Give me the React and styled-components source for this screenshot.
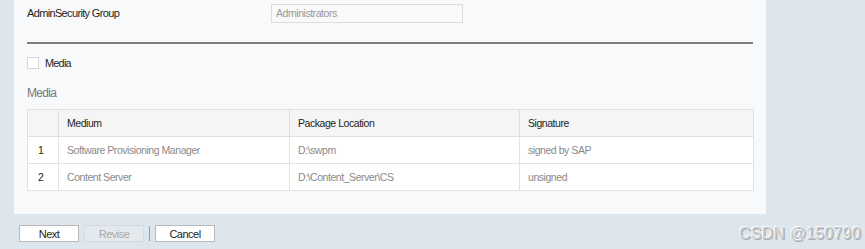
import React from "react";
import styled, { createGlobalStyle } from "styled-components";

const Global = createGlobalStyle`
    html, body {
        margin: 0;
        padding: 0;
        background-color: #dde6ed;
        font-family: "Liberation Sans", Arial, sans-serif;
    }
`
const Page = styled.div`
    position: relative;
    width: 865px;
    height: 249px;
    overflow: hidden;
    background-color: #dde6ed;
    padding-left: 14px;
    box-sizing: border-box;
`
const Panel = styled.div`
    width: 752px;
    height: 214px;
    background-color: #f7f9fa;
    padding: 0 13px;
    box-sizing: border-box;
    display: flex;
    flex-direction: column;
`
const FieldRow = styled.div`
    display: flex;
    align-items: center;
    height: 26px;
`
const FieldLabel = styled.div`
    width: 244px;
    font-size: 11px;
    letter-spacing: -0.65px;
    color: #1e1e1e;
`
const FieldInput = styled.div`
    width: 186px;
    height: 17px;
    border: 1px solid #dcdcdc;
    background-color: #f9f9f9;
    font-size: 10.6px;
    letter-spacing: -0.5px;
    color: #9a9a9a;
    line-height: 17px;
    padding-left: 4px;
    box-sizing: content-box;
`
const Divider = styled.hr`
    margin: 16px 0 0 0;
    border: none;
    border-top: 2px solid #7d7d7d;
    width: 726px;
`
const CheckRow = styled.label`
    display: flex;
    align-items: center;
    gap: 6px;
    margin-top: 13px;
    font-size: 10.8px;
    letter-spacing: -0.7px;
    color: #1e1e1e;
`
const Box = styled.span`
    width: 10px;
    height: 10px;
    border: 1px solid #d6d6d6;
    background-color: #fff;
`
const SectionTitle = styled.div`
    margin-top: 17px;
    font-size: 12px;
    letter-spacing: -0.7px;
    color: #777;
`
const Table = styled.table`
    margin-top: 9px;
    width: 727px;
    border-collapse: collapse;
    background-color: #fff;
    font-size: 10.5px;
    letter-spacing: -0.45px;
`
const Th = styled.th`
    height: 26px;
    text-align: left;
    font-weight: normal;
    color: #1e1e1e;
    background-color: #f5f5f5;
    border: 1px solid #e0e0e0;
    padding: 0 0 0 8px;
    width: ${p => p.$w}px;
`
const Td = styled.td`
    height: 26px;
    border: 1px solid #e3e3e3;
    padding: 0 0 0 ${p => (p.$num ? 10 : 8)}px;
    color: ${p => (p.$num ? "#222" : "#8a8a8a")};
`
const ButtonBar = styled.div`
    display: flex;
    align-items: center;
    gap: 5px;
    padding: 11px 0 0 5px;
`
const Button = styled.button`
    width: 60px;
    height: 17px;
    padding: 0;
    font-family: "Liberation Sans", Arial, sans-serif;
    font-size: 11px;
    letter-spacing: -0.5px;
    color: ${p => (p.disabled ? "#a8a8a8" : "#222")};
    background-color: ${p => (p.disabled ? "#e4e9ee" : "#fff")};
    border: 1px solid ${p => (p.disabled ? "#d4dae0" : "#b9b9b9")};
`
const BarSep = styled.span`
    width: 1px;
    height: 15px;
    background-color: #9a9a9a;
`
const Watermark = styled.div`
    position: absolute;
    right: 4px;
    bottom: 6px;
    font-family: "Liberation Sans", Arial, sans-serif;
    font-size: 16px;
    color: #c4c9cd;
    text-shadow: -1px -1px 0 #fff, 1px 1px 0 #a8adb2;
    letter-spacing: 0.2px;
`

const rows = [
    ["1", "Software Provisioning Manager", "D:\\swpm", "signed by SAP"],
    ["2", "Content Server", "D:\\Content_Server\\CS", "unsigned"],
];

export default function App(){
    return(
        <Page>
            <Global/>
            <Panel>
                <FieldRow>
                    <FieldLabel>AdminSecurity Group</FieldLabel>
                    <FieldInput>Administrators</FieldInput>
                </FieldRow>
                <Divider/>
                <CheckRow><Box/>Media</CheckRow>
                <SectionTitle>Media</SectionTitle>
                <Table>
                    <thead>
                        <tr>
                            <Th $w={22}></Th>
                            <Th $w={222}>Medium</Th>
                            <Th $w={221}>Package Location</Th>
                            <Th>Signature</Th>
                        </tr>
                    </thead>
                    <tbody>
                        {rows.map(r => (
                            <tr key={r[0]}>
                                <Td $num>{r[0]}</Td>
                                <Td>{r[1]}</Td>
                                <Td>{r[2]}</Td>
                                <Td>{r[3]}</Td>
                            </tr>
                        ))}
                    </tbody>
                </Table>
            </Panel>
            <ButtonBar>
                <Button>Next</Button>
                <Button disabled>Revise</Button>
                <BarSep/>
                <Button>Cancel</Button>
            </ButtonBar>
            <Watermark>CSDN @150790</Watermark>
        </Page>
    )
};
